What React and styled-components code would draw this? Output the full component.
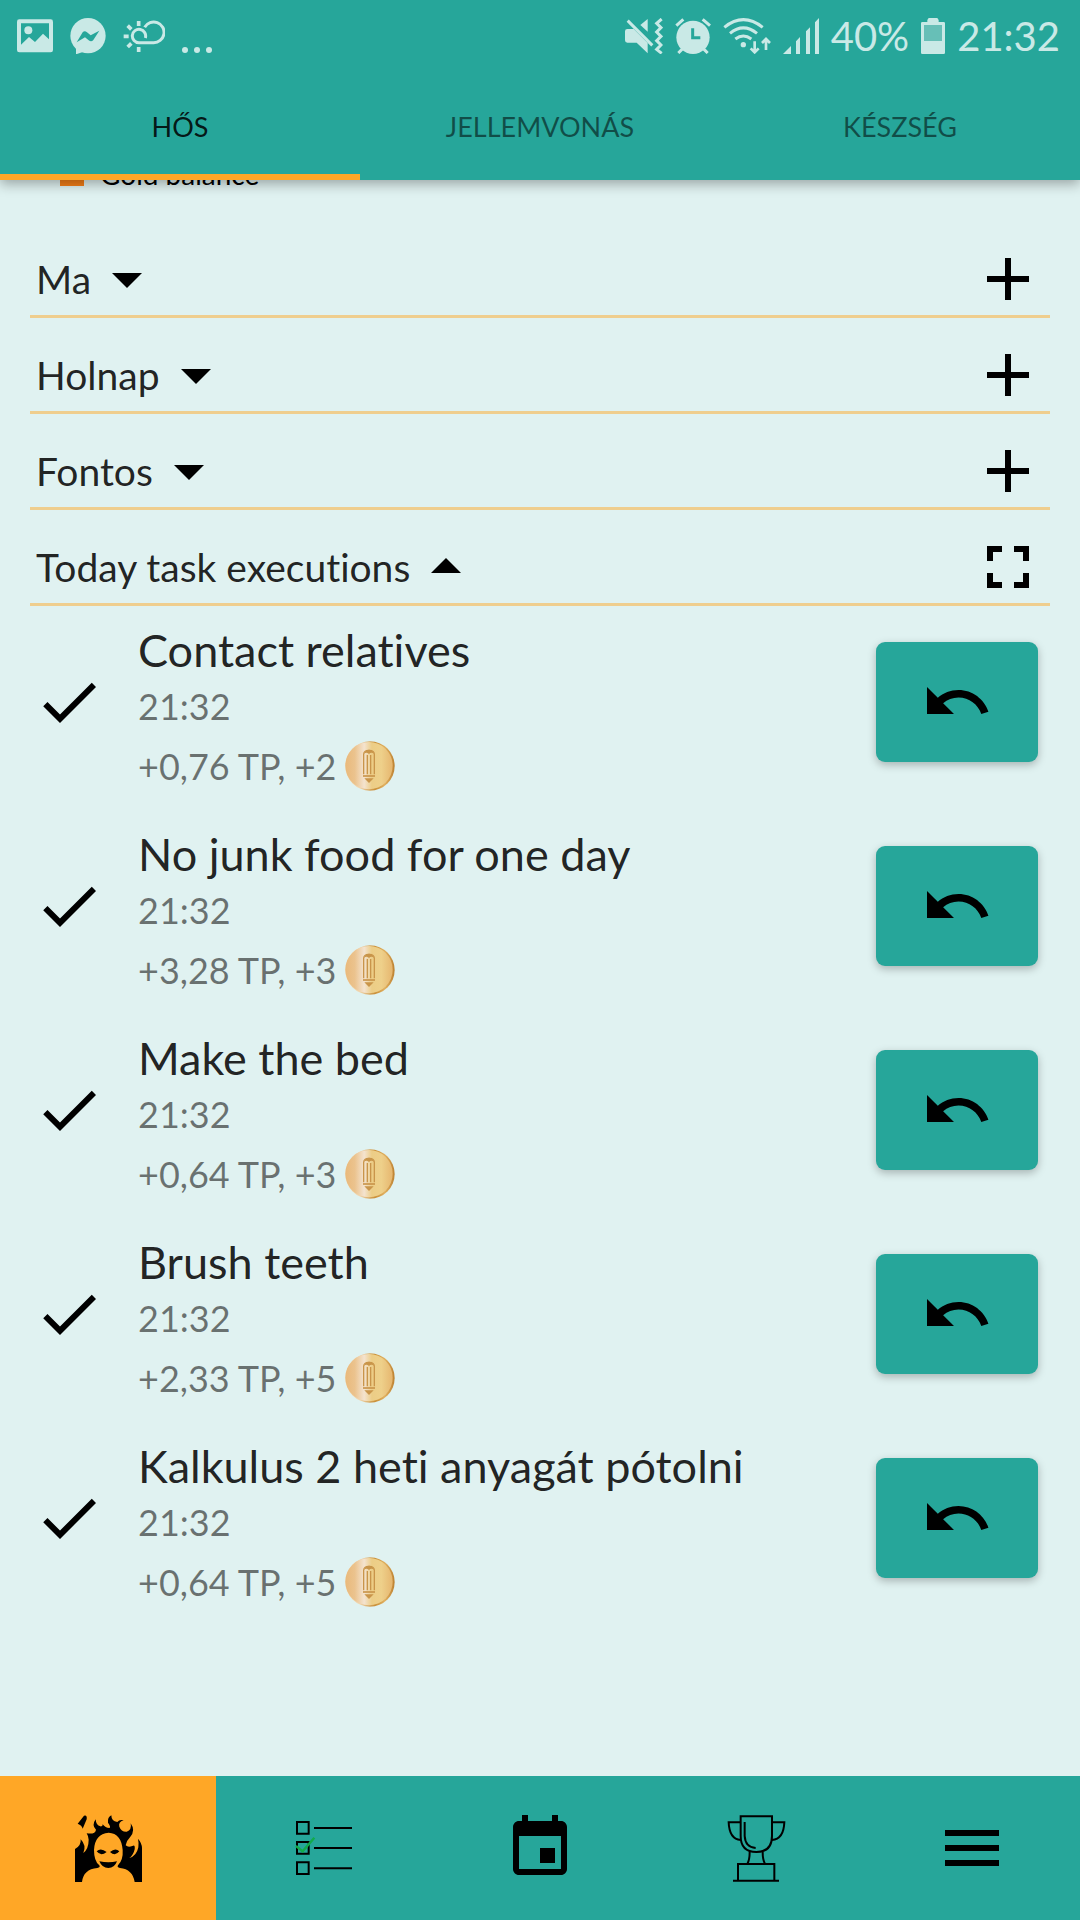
import React, { useState } from "react";
import styled, { createGlobalStyle } from "styled-components";

const teal = "#26a69a";
const orange = "#ffa726";
const pale = "#e0f2f1";
const statusTint = "#c9e9e6";

const GlobalStyle = createGlobalStyle`
  *, *::before, *::after { box-sizing: border-box; }
  body {
    margin: 0;
    background: ${pale};
    color: rgba(0, 0, 0, 0.87);
    font-family: Lato, "Open Sans", sans-serif;
    font-variant-ligatures: none;
  }
  button {
    margin: 0;
    padding: 0;
    border: 0;
    background: none;
    color: inherit;
    font: inherit;
    cursor: pointer;
  }
  svg { display: block; flex: none; }
`;

const Page = styled.div`
  display: flex;
  flex-direction: column;
  min-height: 100vh;
`;

const Header = styled.header`
  position: sticky;
  top: 0;
  z-index: 2;
  background: ${teal};
  box-shadow: 0 4px 12px rgba(0, 0, 0, 0.32);
`;

const StatusBar = styled.div`
  display: flex;
  align-items: center;
  justify-content: space-between;
  height: 72px;
  padding: 0 20px 0 17px;
  color: ${statusTint};
  font-size: 40px;
  line-height: 48px;
`;

const StatusGroup = styled.div`
  display: flex;
  align-items: center;
  gap: ${(p) => p.$gap}px;
`;

const Tabs = styled.div`
  display: flex;
`;

const Tab = styled.button`
  flex: 1;
  height: 108px;
  padding-top: 2px;
  font-size: 27px;
  line-height: 36px;
  text-transform: uppercase;
  color: ${(p) => (p.$active ? "rgba(0, 0, 0, 0.87)" : "rgba(0, 0, 0, 0.54)")};
  box-shadow: inset 0 ${(p) => (p.$active ? "-6px" : "0")} 0 ${orange};
`;

const Main = styled.main`
  flex: 1;
  padding: 0 30px;
`;

const Legend = styled.div`
  display: flex;
  align-items: center;
  gap: 16px;
  height: 48px;
  margin: -30px 0 45px;
  padding-left: 30px;
  color: #000;
  font-size: 28px;
  line-height: 48px;
`;

const Swatch = styled.span`
  width: 24px;
  height: 24px;
  background: #f57f17;
`;

const Sections = styled.div`
  display: flex;
  flex-direction: column;
  gap: 21px;
`;

const SectionHead = styled.div`
  display: flex;
  align-items: center;
  justify-content: space-between;
  padding: 0 6px;
  border-bottom: 3px solid #efce8e;
`;

const SectionToggle = styled.button`
  display: flex;
  align-items: center;
  font-size: 39px;
  line-height: 48px;
  color: rgba(0, 0, 0, 0.87);
  svg { color: #000; }
`;

const IconButton = styled.button`
  color: #000;
`;

const TaskList = styled.ul`
  display: flex;
  flex-direction: column;
  gap: 14px;
  margin: 0;
  padding: 0 12px 48px 3px;
  list-style: none;
`;

const TaskRow = styled.li`
  display: grid;
  grid-template-columns: 72px 1fr 162px;
  column-gap: 33px;
  align-items: center;
  height: 190px;
  color: #000;
`;

const TaskText = styled.div`
  align-self: start;
  padding-top: 16px;
  color: rgba(0, 0, 0, 0.54);
  font-size: 36px;
  line-height: 56px;
`;

const TaskTitle = styled.div`
  color: rgba(0, 0, 0, 0.87);
  font-size: 45px;
`;

const Reward = styled.div`
  display: flex;
  align-items: center;
  gap: 9px;
  height: 64px;
`;

const UndoButton = styled.button`
  display: flex;
  align-items: center;
  justify-content: center;
  height: 120px;
  border-radius: 9px;
  background: ${teal};
  color: #000;
  box-shadow: 0 3px 8px rgba(0, 0, 0, 0.26);
`;

const NavBar = styled.nav`
  position: sticky;
  bottom: 0;
  z-index: 2;
  display: flex;
  background: ${teal};
`;

const NavItem = styled.button`
  display: flex;
  flex: 1;
  align-items: center;
  justify-content: center;
  height: 144px;
  color: #000;
  background: ${(p) => (p.$active ? orange : "transparent")};
`;

const Glyph = ({ d }) => (
  <svg width="72" height="72" viewBox="0 0 24 24" fill="currentColor" aria-hidden="true">
    <path d={d} />
  </svg>
);

const glyphs = {
  down: "M7 10l5 5 5-5z",
  up: "M7 14l5-5 5 5z",
  add: "M19 13h-6v6h-2v-6H5v-2h6V5h2v6h6v2z",
  full: "M7 14H5v5h5v-2H7v-3zm-2-4h2V7h3V5H5v5zm12 7h-3v2h5v-5h-2v3zM14 5v2h3v3h2V5h-5z",
  check: "M9 16.17L4.83 12l-1.42 1.41L9 19 21 7l-1.41-1.41z",
  undo: "M12.5 8c-2.65 0-5.05.99-6.9 2.6L2 7v9h9l-3.62-3.62c1.39-1.16 3.16-1.88 5.12-1.88 3.54 0 6.55 2.31 7.6 5.5l2.37-.78C21.08 11.03 17.15 8 12.5 8z",
  event: "M17 12h-5v5h5v-5zM16 1v2H8V1H6v2H5c-1.11 0-1.99.9-1.99 2L3 19c0 1.1.89 2 2 2h14c1.1 0 2-.9 2-2V5c0-1.1-.9-2-2-2h-1V1h-2zm3 18H5V8h14v11z",
  menu: "M3 18h18v-2H3v2zm0-5h18v-2H3v2zm0-7v2h18V6H3z",
};

const Picture = () => (
  <svg width="36" height="34" viewBox="51 53 108 102" aria-hidden="true">
    <rect x="51" y="54" width="108" height="99" rx="7" fill="currentColor" />
    <path d="M63 66H147V114L129 97L105 122L87 107L63 130Z" fill={teal} />
    <circle cx="85" cy="87" r="12" fill="currentColor" />
  </svg>
);

const Messenger = () => (
  <svg width="36" height="36" viewBox="213 51 108 108" aria-hidden="true">
    <circle cx="267" cy="104" r="53" fill="currentColor" />
    <path d="M231 134V160L260 150Z" fill="currentColor" />
    <path d="M233 124L251 94Q257 88 264 94L275 103L301 89L283 117Q277 124 269 118L258 109Z" fill={teal} />
  </svg>
);

const Weather = () => (
  <svg width="42" height="34" viewBox="366 54 126 102" fill="none" stroke="currentColor" strokeWidth="9" aria-hidden="true">
    <path d="M431 79A31 31 0 1 1 457 125H414A20 20 0 1 1 433 111" />
    <path d="M413 60V75M413 138V153M368 106H383M380 74L391 85M380 138L391 127" strokeWidth="11" />
  </svg>
);

const Dots = () => (
  <svg width="30" height="36" viewBox="540 51 90 108" fill="currentColor" aria-hidden="true">
    <circle cx="549" cy="147" r="9" />
    <circle cx="585" cy="147" r="9" />
    <circle cx="621" cy="147" r="9" />
  </svg>
);

const Mute = () => (
  <svg width="38" height="36" viewBox="81 51 114 108" aria-hidden="true">
    <g fill="currentColor">
      <path d="M88 84H107L149 126V157L116 125H88Q81 125 81 118V91Q81 84 88 84Z" />
      <path d="M149 54V92L127 72Z" />
    </g>
    <g fill="none" stroke="currentColor" strokeWidth="9">
      <path d="M89 59L163 133" />
      <path d="M191 54L176 67L189 80L176 93L189 106L176 119L189 132L176 145L191 157" />
    </g>
  </svg>
);

const Alarm = () => (
  <svg width="36" height="36" viewBox="231 51 108 108" fill="none" stroke="currentColor" strokeWidth="9" aria-hidden="true">
    <circle cx="285" cy="109" r="50" fill="currentColor" stroke="none" />
    <path d="M235 74L256 55M314 55L336 74M241 156L254 143M316 143L329 156" />
    <path d="M284 82V110H307" stroke={teal} />
  </svg>
);

const Wifi = () => (
  <svg width="48" height="36" viewBox="381 51 144 108" fill="none" stroke="currentColor" strokeWidth="9" aria-hidden="true">
    <path d="M385 79Q442 33 500 79M402 97Q442 64 483 97M418 114Q442 96 466 114" />
    <circle cx="442" cy="131" r="8" fill="currentColor" stroke="none" />
    <path d="M476 121V153M464 142L476 154L488 142M510 147V115M498 126L510 114L522 126" strokeWidth="8" />
  </svg>
);

const Signal = () => (
  <svg width="36" height="36" viewBox="543 51 108 108" fill="currentColor" aria-hidden="true">
    <path d="M543 159L567 135V159ZM582 159V121L594 108V159ZM612 159V91L624 79V159ZM639 159V64L651 51V159Z" />
  </svg>
);

const Battery = () => (
  <svg width="24" height="36" viewBox="951 51 72 108" fill="currentColor" aria-hidden="true">
    <path d="M974 51h26l4 6v6h15q4 0 4 4v88q0 4-4 4h-64q-4 0-4-4V67q0-4 4-4h15v-6z" />
    <rect x="960" y="72" width="54" height="48" fill="#67bfb7" />
  </svg>
);

const Coin = () => (
  <svg width="50" height="50" viewBox="0 0 150 150" aria-hidden="true">
    <defs>
      <linearGradient id="coinFace" x1="0" y1="0" x2="1" y2="0">
        <stop offset="0" stopColor="#e9b97b" />
        <stop offset="0.2" stopColor="#ebc38e" />
        <stop offset="0.4" stopColor="#f4e3cf" />
        <stop offset="0.56" stopColor="#eccd86" />
        <stop offset="0.76" stopColor="#eed08a" />
        <stop offset="1" stopColor="#e6b66f" />
      </linearGradient>
      <linearGradient id="coinRim" x1="0" y1="0" x2="1" y2="0">
        <stop offset="0.3" stopColor="#f0d6ae" />
        <stop offset="0.6" stopColor="#c98f38" />
        <stop offset="0.8" stopColor="#e0b060" />
        <stop offset="1" stopColor="#bd8130" />
      </linearGradient>
    </defs>
    <circle cx="75" cy="75" r="74" fill="url(#coinRim)" />
    <circle cx="72" cy="74" r="71" fill="url(#coinFace)" />
    <g fill="none" stroke="#c9954a" strokeWidth="4">
      <path d="M56 100V40Q56 28 72 28Q88 28 88 40V100" />
      <path d="M67 42V100M77 42V100" />
      <path d="M54 105H90" strokeWidth="5" />
    </g>
    <path d="M57 39Q64 32 72 39Q80 32 87 39Q84 26 72 26Q60 26 57 39Z" fill="#c9954a" />
    <path d="M58 112H86L72 126Z" fill="#c9954a" />
  </svg>
);

const Flame = () => (
  <svg width="72" height="72" viewBox="12 12 216 216" fill="currentColor" aria-hidden="true">
    <path d="M21 222V123Q40 113 38 94Q56 112 46 135Q62 122 62 95Q62 86 56 76Q82 80 84 65Q70 52 83 34Q84 52 97 55Q105 56 104 49Q112 60 124 60Q130 58 120 44Q118 28 130 22Q130 40 148 42Q154 34 167 37Q150 42 154 56Q160 72 176 71Q192 66 188 46Q204 68 186 88Q174 100 173 112Q180 119 193 114Q202 108 200 124Q196 142 184 150Q206 144 211 118Q213 106 210 92Q222 106 222 120V222H200Q194 184 156 180Q146 178 150 172Q166 156 164 126Q160 76 122 74Q80 78 78 126Q78 160 94 172Q98 178 88 180Q46 184 42 222Z" />
    <path d="M29 47L48 23Q58 20 56 34L44 62Q42 52 29 47Z" />
    <path d="M86 130Q98 118 116 132Q98 146 86 130ZM154 130Q142 118 126 132Q142 146 154 130Z" />
    <path d="M94 160Q122 166 147 160Q140 180 121 180Q102 180 94 160Z" />
  </svg>
);

const Checklist = () => (
  <svg width="72" height="72" viewBox="864 156 216 216" fill="none" stroke="currentColor" strokeWidth="6" aria-hidden="true">
    <path d="M891 186H926V221H891ZM891 246H926V281H891ZM891 307H926V342H891Z" />
    <path d="M942 204H1056M942 264H1056M942 325H1056" />
    <path d="M888 258L908 274L943 233" stroke="#12ab4b" strokeWidth="7" />
  </svg>
);

const Trophy = () => (
  <svg width="72" height="72" viewBox="12 12 216 216" fill="none" stroke="currentColor" strokeWidth="6" aria-hidden="true">
    <path d="M74 25V84Q74 132 121 132Q168 132 168 84V25Z" />
    <path d="M74 43H38Q40 94 74 96M168 43H205Q203 94 168 96" />
    <path d="M86 42V84Q88 118 119 120" />
    <path d="M101 132Q101 155 94 168M140 132Q140 155 147 168" />
    <path d="M66 218V168H175V218M51 218H189" />
  </svg>
);

const tabs = ["Hős", "Jellemvonás", "Készség"];

const sections = [
  { name: "Ma" },
  { name: "Holnap" },
  { name: "Fontos" },
  { name: "Today task executions", open: true },
];

const tasks = [
  { title: "Contact relatives", xp: "0,76", gold: 2 },
  { title: "No junk food for one day", xp: "3,28", gold: 3 },
  { title: "Make the bed", xp: "0,64", gold: 3 },
  { title: "Brush teeth", xp: "2,33", gold: 5 },
  { title: "Kalkulus 2 heti anyagát pótolni", xp: "0,64", gold: 5 },
];

const navItems = [
  { label: "Hero", icon: <Flame /> },
  { label: "Tasks", icon: <Checklist /> },
  { label: "Calendar", icon: <Glyph d={glyphs.event} /> },
  { label: "Achievements", icon: <Trophy /> },
  { label: "Menu", icon: <Glyph d={glyphs.menu} /> },
];

export default function App() {
  const [tab, setTab] = useState(0);
  const [page, setPage] = useState(0);

  return (
    <Page>
      <GlobalStyle />
      <Header>
        <StatusBar>
          <StatusGroup $gap={17}>
            <Picture />
            <Messenger />
            <Weather />
            <Dots />
          </StatusGroup>
          <StatusGroup $gap={12}>
            <Mute />
            <Alarm />
            <Wifi />
            <Signal />
            <span>40%</span>
            <Battery />
            <span>21:32</span>
          </StatusGroup>
        </StatusBar>
        <Tabs role="tablist">
          {tabs.map((name, i) => (
            <Tab key={name} role="tab" aria-selected={i === tab} $active={i === tab} onClick={() => setTab(i)}>
              {name}
            </Tab>
          ))}
        </Tabs>
      </Header>

      <Main>
        <Legend>
          <Swatch />
          Gold balance
        </Legend>
        <Sections>
          {sections.map(({ name, open }) => (
            <SectionHead key={name}>
              <SectionToggle aria-expanded={!!open}>
                {name}
                <Glyph d={open ? glyphs.up : glyphs.down} />
              </SectionToggle>
              <IconButton aria-label={open ? "Full screen" : `Add to ${name}`}>
                <Glyph d={open ? glyphs.full : glyphs.add} />
              </IconButton>
            </SectionHead>
          ))}
        </Sections>
        <TaskList>
          {tasks.map(({ title, xp, gold }) => (
            <TaskRow key={title}>
              <Glyph d={glyphs.check} />
              <TaskText>
                <TaskTitle>{title}</TaskTitle>
                <div>21:32</div>
                <Reward>
                  <span>{`+${xp} TP, +${gold}`}</span>
                  <Coin />
                </Reward>
              </TaskText>
              <UndoButton aria-label={`Undo ${title}`}>
                <Glyph d={glyphs.undo} />
              </UndoButton>
            </TaskRow>
          ))}
        </TaskList>
      </Main>

      <NavBar>
        {navItems.map(({ label, icon }, i) => (
          <NavItem key={label} aria-label={label} $active={i === page} onClick={() => setPage(i)}>
            {icon}
          </NavItem>
        ))}
      </NavBar>
    </Page>
  );
}
